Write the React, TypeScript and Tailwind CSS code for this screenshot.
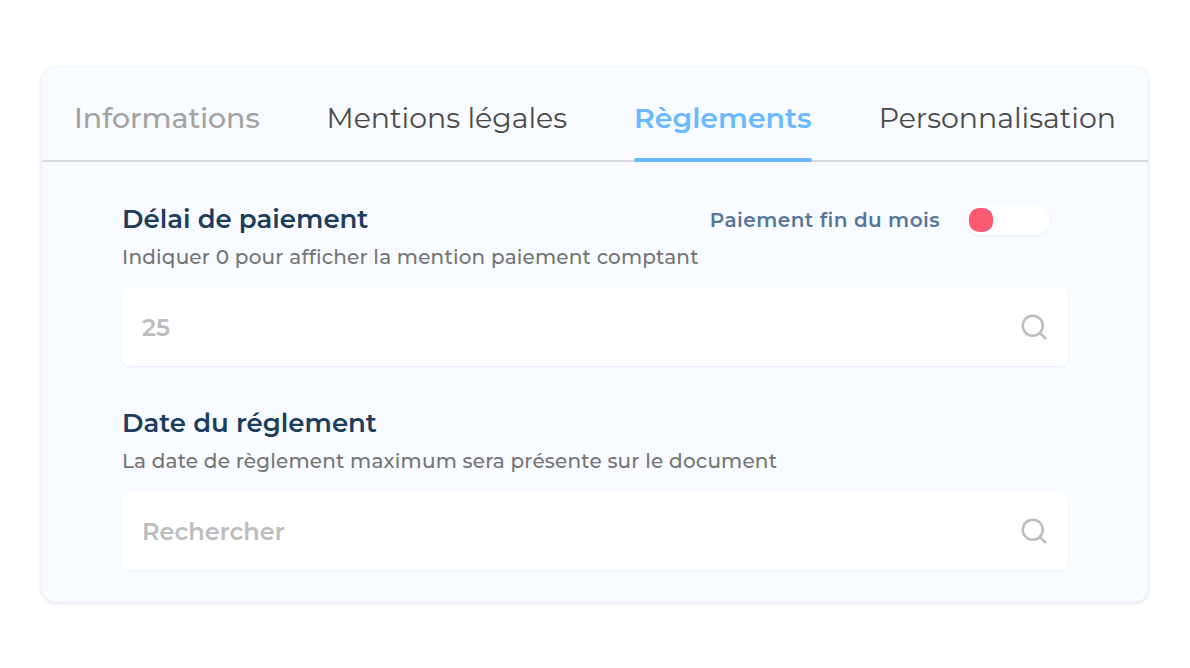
import React from 'react';
import { Search } from 'lucide-react';

const TABS = [
  { label: 'Informations', cls: 'text-[#a3a3a3] font-medium' },
  { label: 'Mentions légales', cls: 'text-[#4a4a4a]' },
  { label: 'Règlements', cls: 'text-[#6ab8ff] font-semibold', active: true },
  { label: 'Personnalisation', cls: 'text-[#4a4a4a]' },
];

const Field: React.FC<{ placeholder: string }> = ({ placeholder }) => (
  <div className="mt-[17px] h-[78px] bg-white rounded-lg shadow-[0_1px_2px_rgba(90,140,200,0.1)] flex items-center justify-between pl-5 pr-[19px]">
    <span className="pt-[2px] text-[24px] font-semibold text-[#bdbdbd]">{placeholder}</span>
    <Search size={30} strokeWidth={2} className="text-[#bdbdbd]" />
  </div>
);

export default function App() {
  return (
    <div className="w-[1190px] h-[668px] bg-white pt-[67px] px-[42px]" style={{ fontFamily: 'Montserrat, Inter, "Noto Sans", sans-serif' }}>
      <div className="w-[1106px] h-[535px] bg-[#f8fbff] rounded-[14px] shadow-[0_1px_4px_rgba(60,80,110,0.18)]">
        <div className="h-[95px] border-b-2 border-[#d8dade] flex justify-between px-[32px]">
          {TABS.map((t) => (
            <div key={t.label} className={`relative pt-[32px] text-[28.4px] leading-[38px] ${t.cls}`}>
              {t.label}
              {t.active && <div className="absolute left-0 right-0 -bottom-[2px] h-[4px] bg-[#6ab8ff] rounded-full" />}
            </div>
          ))}
        </div>
        <div className="px-[80px] pt-[41px]">
          <div className="h-[32px] flex justify-between items-start pr-[18px]">
            <div className="text-[26px] leading-[32px] font-semibold text-[#1c3d5c]">Délai de paiement</div>
            <div className="mt-[2px] flex items-center gap-[25px]">
              <span className="text-[20px] font-semibold tracking-[0.45px] text-[#55779b]">Paiement fin du mois</span>
              <div className="w-[85px] h-[30px] bg-white rounded-full flex items-center pl-[4px] shadow-[0_1px_2px_rgba(90,140,200,0.1)]">
                <div className="w-[24px] h-[24px] rounded-[10px] bg-[#fb5a72]" />
              </div>
            </div>
          </div>
          <div className="mt-[8px] text-[20px] leading-[28px] font-medium tracking-[0.19px] text-[#757575]">Indiquer 0 pour afficher la mention paiement comptant</div>
          <Field placeholder="25" />
          <div className="mt-[41px] text-[26px] leading-[32px] font-semibold text-[#1c3d5c]">Date du réglement</div>
          <div className="mt-[8px] text-[20px] leading-[28px] font-medium tracking-[0.19px] text-[#757575]">La date de règlement maximum sera présente sur le document</div>
          <Field placeholder="Rechercher" />
        </div>
      </div>
    </div>
  );
}
